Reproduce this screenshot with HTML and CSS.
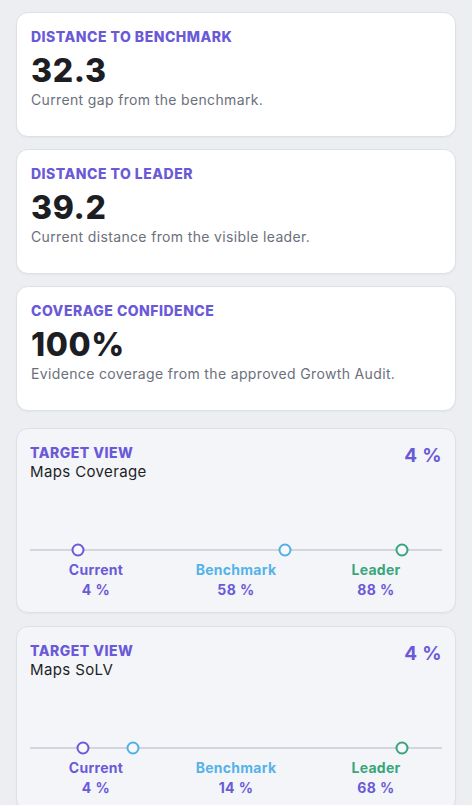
FILE: index.html
```html
<!DOCTYPE html>
<html lang="en">
<head>
<meta charset="utf-8">
<title>Benchmark overview</title>
<link rel="stylesheet" href="styles.css">
</head>
<body>
<main class="page">
  <section class="stats">
    <article class="stat-card">
      <h3 class="eyebrow">Distance to benchmark</h3>
      <div class="stat-value">32.3</div>
      <p class="stat-desc">Current gap from the benchmark.</p>
    </article>
    <article class="stat-card">
      <h3 class="eyebrow">Distance to leader</h3>
      <div class="stat-value">39.2</div>
      <p class="stat-desc">Current distance from the visible leader.</p>
    </article>
    <article class="stat-card">
      <h3 class="eyebrow">Coverage confidence</h3>
      <div class="stat-value">100%</div>
      <p class="stat-desc">Evidence coverage from the approved Growth Audit.</p>
    </article>
  </section>

  <section class="targets">
    <article class="target-card">
      <header class="target-head">
        <div>
          <h3 class="eyebrow">Target view</h3>
          <div class="target-name">Maps Coverage</div>
        </div>
        <div class="target-score">4 %</div>
      </header>
      <div class="track">
        <span class="dot dot-current" style="left: 11.65%"></span>
        <span class="dot dot-bench" style="left: 61.9%"></span>
        <span class="dot dot-leader" style="left: 90.3%"></span>
      </div>
      <div class="legend">
        <div class="legend-item"><span class="legend-label current">Current</span><span class="legend-value">4 %</span></div>
        <div class="legend-item"><span class="legend-label bench">Benchmark</span><span class="legend-value">58 %</span></div>
        <div class="legend-item"><span class="legend-label leader">Leader</span><span class="legend-value">88 %</span></div>
      </div>
    </article>

    <article class="target-card">
      <header class="target-head">
        <div>
          <h3 class="eyebrow">Target view</h3>
          <div class="target-name">Maps SoLV</div>
        </div>
        <div class="target-score">4 %</div>
      </header>
      <div class="track">
        <span class="dot dot-current" style="left: 12.9%"></span>
        <span class="dot dot-bench" style="left: 25%"></span>
        <span class="dot dot-leader" style="left: 90.3%"></span>
      </div>
      <div class="legend">
        <div class="legend-item"><span class="legend-label current">Current</span><span class="legend-value">4 %</span></div>
        <div class="legend-item"><span class="legend-label bench">Benchmark</span><span class="legend-value">14 %</span></div>
        <div class="legend-item"><span class="legend-label leader">Leader</span><span class="legend-value">68 %</span></div>
      </div>
    </article>
  </section>
</main>
</body>
</html>
```

FILE: styles.css
```css
* { box-sizing: border-box; }

html, body {
  margin: 0;
  padding: 0;
}

body {
  background: #eceef1;
  font-family: Inter, "Noto Sans", "Liberation Sans", sans-serif;
  color: #1d1f25;
}

.page {
  padding: 12px 16px 24px;
  display: flex;
  flex-direction: column;
  gap: 17px;
}

.stats {
  display: flex;
  flex-direction: column;
  gap: 12px;
}

.targets {
  display: flex;
  flex-direction: column;
  gap: 13px;
}

.stat-card {
  background: #ffffff;
  border: 1px solid #dde0e5;
  border-radius: 12px;
  padding: 15px 14px 27px;
  box-shadow: 0 1px 2px rgba(20, 24, 40, 0.04);
}

.eyebrow {
  margin: 0;
  font-size: 14px;
  line-height: 17px;
  font-weight: 800;
  letter-spacing: 0.035em;
  text-transform: uppercase;
  color: #6a5ad8;
}

.stat-value {
  margin-top: 7px;
  font-size: 32px;
  line-height: 38px;
  font-weight: 800;
  color: #1c1e24;
  letter-spacing: 0.02em;
}

.stat-desc {
  margin: 0;
  font-size: 14px;
  line-height: 19px;
  color: #6b707c;
  letter-spacing: 0.025em;
}

.target-card {
  background: #f4f5f9;
  border: 1px solid #dde0e5;
  border-radius: 12px;
  padding: 15px 13px 12px;
  box-shadow: 0 1px 2px rgba(20, 24, 40, 0.04);
}

.target-head {
  display: flex;
  justify-content: space-between;
  align-items: flex-start;
}

.target-name {
  margin-top: 1px;
  font-size: 15px;
  line-height: 20px;
  color: #1d1f25;
  letter-spacing: 0.025em;
}

.target-score {
  font-size: 19px;
  line-height: 24px;
  font-weight: 700;
  color: #6a5ad8;
  letter-spacing: 0.02em;
}

.track {
  position: relative;
  height: 16px;
  margin-top: 60px;
}

.track::before {
  content: "";
  position: absolute;
  left: 0;
  right: 0;
  top: 7px;
  height: 2px;
  background: #d3d6dc;
}

.dot {
  position: absolute;
  top: 50%;
  width: 13px;
  height: 13px;
  border-radius: 50%;
  background: #f7f8fb;
  border: 2.5px solid #6a5ad8;
  transform: translate(-50%, -50%);
}

.dot-bench { border-color: #4fb0e6; }
.dot-leader { border-color: #35a57a; }

.legend {
  margin-top: 2px;
  display: grid;
  grid-template-columns: repeat(3, 1fr);
  gap: 8px;
}

.legend-item {
  display: flex;
  flex-direction: column;
  align-items: center;
}

.legend-label,
.legend-value {
  font-size: 14px;
  line-height: 20px;
  font-weight: 700;
  letter-spacing: 0.02em;
}

.legend-label.current { color: #6a5ad8; }
.legend-label.bench { color: #56b3e8; }
.legend-label.leader { color: #3aa67c; }

.legend-value {
  color: #6a5ad8;
  letter-spacing: 0.03em;
}
```
